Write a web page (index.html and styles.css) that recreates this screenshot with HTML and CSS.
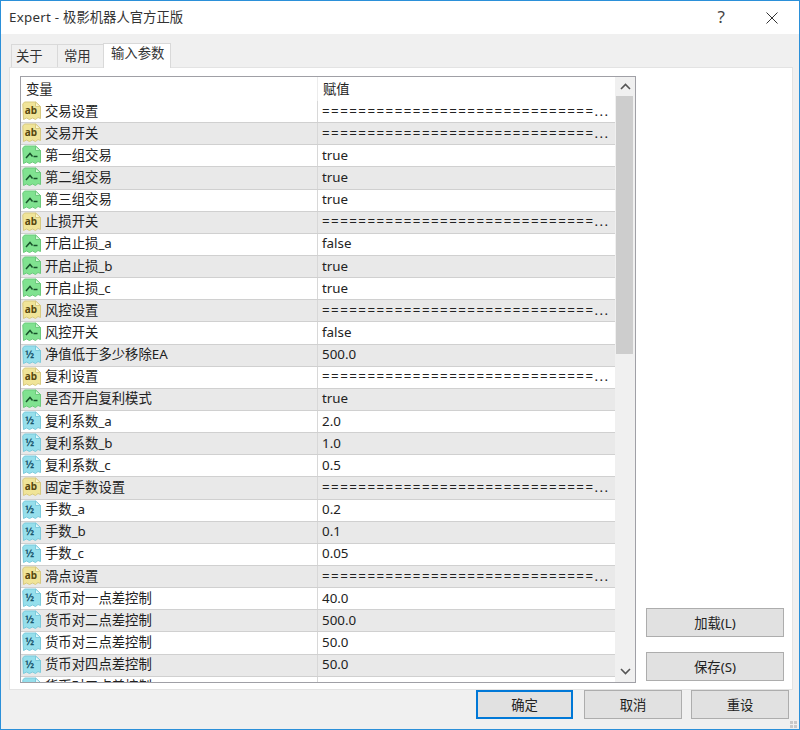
FILE: index.html
```html
<!DOCTYPE html>
<html lang="zh">
<head>
<meta charset="utf-8">
<title>Expert</title>
<link rel="stylesheet" href="styles.css">
</head>
<body>
<svg class="defs" width="0" height="0" aria-hidden="true">
  <symbol id="ico-ab" viewBox="0 0 20 20">
    <path d="M2.500 1H13.500L18.500 5.500V17.500L16 16.500 13.500 18.500 10.500 17 7.500 18.500 4.500 17 1.500 18.500 .8 3Z" fill="#f0e498" stroke="#d8ca80"/>
    <path d="M13.500 1V5.500H18.500Z" fill="#fbf6d2" stroke="#d8ca80"/>
    <text x="2.800" y="12.600" class="ico-t">ab</text>
  </symbol>
  <symbol id="ico-bool" viewBox="0 0 20 20">
    <path d="M2.500 1H13.500L18.500 5.500V17.500L16 16.500 13.500 18.500 10.500 17 7.500 18.500 4.500 17 1.500 18.500 .8 3Z" fill="#80e290" stroke="#6cca7c"/>
    <path d="M13.500 1V5.500H18.500Z" fill="#d6f7da" stroke="#6cca7c"/>
    <path d="M4 13 8 8.500 10.500 11.500" fill="none" stroke="#17512a" stroke-width="1.500"/>
    <path d="M11.500 11.500H15.500" fill="none" stroke="#17512a" stroke-width="1.500"/>
  </symbol>
  <symbol id="ico-num" viewBox="0 0 20 20">
    <path d="M2.500 1H13.500L18.500 5.500V17.500L16 16.500 13.500 18.500 10.500 17 7.500 18.500 4.500 17 1.500 18.500 .8 3Z" fill="#96dfec" stroke="#7ccbdc"/>
    <path d="M13.500 1V5.500H18.500Z" fill="#e2f8fc" stroke="#7ccbdc"/>
    <text x="3" y="12.500" class="ico-n">½</text>
  </symbol>
</svg>
<div class="window">
  <header class="titlebar">
    <span class="title"><span class="title-latin">Expert - </span>极影机器人官方正版</span>
    <span class="help">?</span>
    <svg class="close" width="12" height="12" viewBox="0 0 12 12"><path d="M.5 .5 11.500 11.500M11.500 .5 .5 11.500" stroke="#333" stroke-width="1" fill="none"/></svg>
  </header>
  <nav class="tabs">
    <span class="tab t1">关于</span>
    <span class="tab t2">常用</span>
    <span class="tab active">输入参数</span>
  </nav>
  <section class="panel">
    <div class="list">
      <div class="grid">
        <div class="head"><span class="hname">变量</span><span class="hval">赋值</span></div>
        <div class="rows">
          <div class="row"><span class="name"><svg class="ico"><use href="#ico-ab"/></svg>交易设置</span><span class="val eq">==============================...</span></div>
          <div class="row alt"><span class="name"><svg class="ico"><use href="#ico-ab"/></svg>交易开关</span><span class="val eq">==============================...</span></div>
          <div class="row"><span class="name"><svg class="ico"><use href="#ico-bool"/></svg>第一组交易</span><span class="val">true</span></div>
          <div class="row alt"><span class="name"><svg class="ico"><use href="#ico-bool"/></svg>第二组交易</span><span class="val">true</span></div>
          <div class="row"><span class="name"><svg class="ico"><use href="#ico-bool"/></svg>第三组交易</span><span class="val">true</span></div>
          <div class="row alt"><span class="name"><svg class="ico"><use href="#ico-ab"/></svg>止损开关</span><span class="val eq">==============================...</span></div>
          <div class="row"><span class="name"><svg class="ico"><use href="#ico-bool"/></svg>开启止损_a</span><span class="val">false</span></div>
          <div class="row alt"><span class="name"><svg class="ico"><use href="#ico-bool"/></svg>开启止损_b</span><span class="val">true</span></div>
          <div class="row"><span class="name"><svg class="ico"><use href="#ico-bool"/></svg>开启止损_c</span><span class="val">true</span></div>
          <div class="row alt"><span class="name"><svg class="ico"><use href="#ico-ab"/></svg>风控设置</span><span class="val eq">==============================...</span></div>
          <div class="row"><span class="name"><svg class="ico"><use href="#ico-bool"/></svg>风控开关</span><span class="val">false</span></div>
          <div class="row alt"><span class="name"><svg class="ico"><use href="#ico-num"/></svg>净值低于多少移除EA</span><span class="val">500.0</span></div>
          <div class="row"><span class="name"><svg class="ico"><use href="#ico-ab"/></svg>复利设置</span><span class="val eq">==============================...</span></div>
          <div class="row alt"><span class="name"><svg class="ico"><use href="#ico-bool"/></svg>是否开启复利模式</span><span class="val">true</span></div>
          <div class="row"><span class="name"><svg class="ico"><use href="#ico-num"/></svg>复利系数_a</span><span class="val">2.0</span></div>
          <div class="row alt"><span class="name"><svg class="ico"><use href="#ico-num"/></svg>复利系数_b</span><span class="val">1.0</span></div>
          <div class="row"><span class="name"><svg class="ico"><use href="#ico-num"/></svg>复利系数_c</span><span class="val">0.5</span></div>
          <div class="row alt"><span class="name"><svg class="ico"><use href="#ico-ab"/></svg>固定手数设置</span><span class="val eq">==============================...</span></div>
          <div class="row"><span class="name"><svg class="ico"><use href="#ico-num"/></svg>手数_a</span><span class="val">0.2</span></div>
          <div class="row alt"><span class="name"><svg class="ico"><use href="#ico-num"/></svg>手数_b</span><span class="val">0.1</span></div>
          <div class="row"><span class="name"><svg class="ico"><use href="#ico-num"/></svg>手数_c</span><span class="val">0.05</span></div>
          <div class="row alt"><span class="name"><svg class="ico"><use href="#ico-ab"/></svg>滑点设置</span><span class="val eq">==============================...</span></div>
          <div class="row"><span class="name"><svg class="ico"><use href="#ico-num"/></svg>货币对一点差控制</span><span class="val">40.0</span></div>
          <div class="row alt"><span class="name"><svg class="ico"><use href="#ico-num"/></svg>货币对二点差控制</span><span class="val">500.0</span></div>
          <div class="row"><span class="name"><svg class="ico"><use href="#ico-num"/></svg>货币对三点差控制</span><span class="val">50.0</span></div>
          <div class="row alt"><span class="name"><svg class="ico"><use href="#ico-num"/></svg>货币对四点差控制</span><span class="val">50.0</span></div>
          <div class="row"><span class="name"><svg class="ico"><use href="#ico-num"/></svg>货币对五点差控制</span></div>
        </div>
      </div>
      <div class="scrollbar">
        <svg class="arrow" width="11" height="7" viewBox="0 0 11 7"><path d="M1 6 5.500 1.500 10 6" fill="none" stroke="#555" stroke-width="1.600"/></svg>
        <div class="track"><div class="thumb"></div></div>
        <svg class="arrow arrow-down" width="11" height="7" viewBox="0 0 11 7"><path d="M1 1 5.500 5.500 10 1" fill="none" stroke="#555" stroke-width="1.600"/></svg>
      </div>
    </div>
    <div class="side">
      <button class="btn side-btn">加载(L)</button>
      <button class="btn side-btn">保存(S)</button>
    </div>
  </section>
  <footer class="footer">
    <button class="btn foot-btn default">确定</button>
    <button class="btn foot-btn">取消</button>
    <button class="btn foot-btn">重设</button>
  </footer>
  <svg class="grip" width="7" height="7" viewBox="0 0 7 7"><path d="M0 0H3V3H0ZM4 0H7V3H4ZM0 4H3V7H0ZM4 4H7V7H4Z" fill="#c8c8c8"/></svg>
</div>
</body>
</html>
```
FILE: styles.css
```css
* { box-sizing: border-box; }
html, body { margin: 0; padding: 0; }
body {
  width: 800px;
  height: 730px;
  overflow: hidden;
  font-family: "Noto Sans", "Noto Sans CJK SC", sans-serif;
  font-size: 13.35px;
  color: #222;
  background: #f0f0f0;
}
.defs { position: absolute; }
.ico-t { font: bold 10px "Noto Sans", sans-serif; fill: #57480f; }
.ico-n { font: bold 10.5px "Noto Sans", sans-serif; fill: #1a566c; }
.window {
  position: relative;
  width: 800px;
  height: 730px;
  display: flex;
  flex-direction: column;
  border: 1px solid #2b90d9;
  background: #f0f0f0;
}
.titlebar {
  height: 33px;
  flex: none;
  background: #fff;
  display: flex;
  align-items: center;
  padding: 0 21px 0 8px;
}
.title { flex: 1; color: #333; line-height: 33px; height: 33px; }
.title-latin { letter-spacing: .25px; }
.help { font-size: 17px; color: #444; margin-right: 41px; line-height: 31px; height: 33px; }
.close { display: block; }
.tabs {
  flex: none;
  height: 33px;
  display: flex;
  align-items: flex-end;
  padding-left: 10px;
  position: relative;
  z-index: 1;
}
.tab {
  height: 23px;
  border: 1px solid #d9d9d9;
  border-bottom: none;
  background: #f0f0f0;
  line-height: 22px;
  color: #333;
  white-space: nowrap;
}
.t1 { width: 47px; padding-left: 4px; }
.t2 { width: 47px; padding-left: 6px; margin-left: -1px; }
.active {
  height: 25px;
  width: 68px;
  background: #fff;
  padding-left: 7px;
  margin-bottom: -1px;
  margin-left: -1px;
  position: relative;
  z-index: 2;
  line-height: 19px;
}
.panel {
  flex: none;
  width: 784px;
  height: 623px;
  margin-left: 8px;
  background: #fff;
  border: 1px solid #e3e3e3;
  padding: 8px 8px 6px 10px;
  display: flex;
}
.list {
  width: 616px;
  height: 607px;
  border: 1px solid #a0a0a6;
  display: flex;
  background: #fff;
  overflow: hidden;
}
.grid { width: 594px; overflow: hidden; }
.head {
  height: 24px;
  display: flex;
  line-height: 25px;
}
.hname { width: 297px; padding-left: 5px; border-right: 1px solid #ececec; }
.hval { padding-left: 5px; }
.row {
  height: 22.15px;
  display: flex;
  align-items: center;
  border-bottom: 1px solid #d0d0d0;
}
.row.alt { background: #e9e9e9; }
.name {
  width: 297px;
  flex: none;
  height: 100%;
  display: flex;
  align-items: center;
  padding-bottom: 1px;
  border-right: 1px solid #d8d8d8;
  white-space: nowrap;
  line-height: 19px;
}
.ico { width: 20px; height: 20px; margin: 0 3px 0 1px; flex: none; }
.val { padding: 0 0 2px 4px; white-space: nowrap; }
.eq { letter-spacing: 1.45px; }
.scrollbar {
  width: 20px;
  flex: none;
  background: #f0f0f0;
  display: flex;
  flex-direction: column;
  align-items: center;
}
.arrow { flex: none; margin: 6px 0 6px; }
.arrow-down { margin: 4px 0 7px; }
.track { flex: 1; width: 100%; padding: 0 1px; }
.thumb { width: 17px; height: 258px; background: #cdcdcd; }
.side {
  flex: 1;
  display: flex;
  flex-direction: column;
  align-items: flex-end;
  justify-content: flex-end;
  gap: 15px;
  padding: 0 0 2px;
}
.btn {
  font: inherit;
  color: #222;
  background: #e1e1e1;
  border: 1px solid #adadad;
  padding: 0;
}
.side-btn { width: 138px; height: 29px; }
.footer {
  flex: 1;
  display: flex;
  justify-content: flex-end;
  align-items: flex-start;
  gap: 9px;
  padding: 0 10px 0 0;
}
.foot-btn { width: 98px; height: 29px; }
.default { width: 97px; margin-right: 2px; border: 2px solid #0078d7; }
.grip { position: absolute; right: 2px; bottom: 1px; }
```
